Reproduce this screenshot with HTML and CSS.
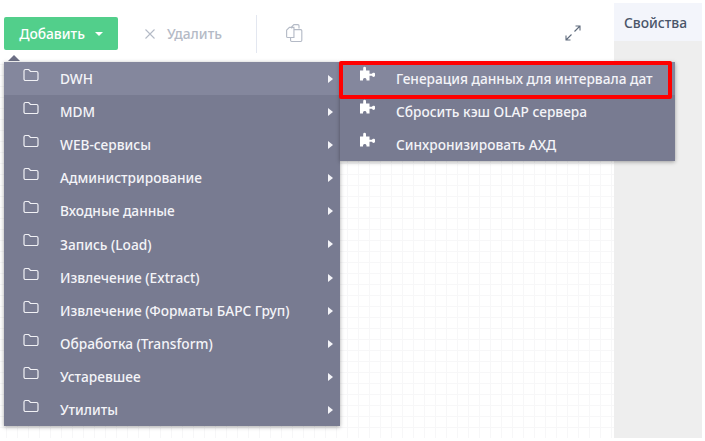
FILE: index.html
```html
<!DOCTYPE html>
<html lang="ru">
<head>
<meta charset="utf-8">
<title>Конструктор</title>
<link rel="stylesheet" href="styles.css">
</head>
<body>
<svg class="sprites" width="0" height="0" aria-hidden="true">
  <symbol id="folder" viewBox="0 0 16 14"><path d="M1 3a1.500 1.500 0 0 1 1.500-1.500h3.200l1.800 2h6A1.500 1.500 0 0 1 15 5v6a1.500 1.500 0 0 1-1.500 1.500h-11A1.500 1.500 0 0 1 1 11z" fill="none" stroke="currentColor" stroke-width="1.200"/></symbol>
  <symbol id="puzzle" viewBox="0 0 15 15"><path d="M0 4.500H3.200V2.200a1.400 1.400 0 0 1 2.800 0V4.500H9.500V7.800H12A1 1 0 0 1 15 8.800A1 1 0 0 1 12 9.800H9.500V14.500H6.500V13.500A1.800 1.800 0 0 0 3 13.500V14.500H0z" fill="currentColor"/></symbol>
</svg>
<div class="app">
  <main class="workspace">
    <div class="toolbar">
      <button class="btn-add">Добавить <span class="caret"></span></button>
      <button class="btn-del"><svg class="x" viewBox="0 0 12 12"><path d="M1.500 1.500l9 9m0-9l-9 9" stroke="currentColor" stroke-width="1.100" fill="none"/></svg>Удалить</button>
      <span class="sep"></span>
      <svg class="copy" viewBox="2 1 15 16"><path d="M7 5V3.500L9 1.500h3.500a1 1 0 0 1 1 1V5M2.500 6.500L5 4h4v9H3.500a1 1 0 0 1-1-1zM9 6h6a1 1 0 0 1 1 1v8.500a1 1 0 0 1-1 1H7a1 1 0 0 1-1-1V13" fill="none" stroke="currentColor" stroke-width="1"/></svg>
      <svg class="expand" viewBox="0 0 16 16"><path d="M9.500 6.500L15 1M10.500 1H15V5.500M6.500 9.500L1 15M1 10.500V15H5.500" fill="none" stroke="currentColor" stroke-width="1.100"/></svg>
    </div>
    <div class="canvas"></div>
  </main>
  <aside class="props">
    <div class="props-head">Свойства</div>
    <div class="props-body"></div>
  </aside>
</div>

<div class="menu-arrow"></div>
<ul class="menu main-menu">
  <li class="item active"><svg class="ico"><use href="#folder"/></svg><span>DWH</span><i class="tri"></i></li>
  <li class="item"><svg class="ico"><use href="#folder"/></svg><span>MDM</span><i class="tri"></i></li>
  <li class="item"><svg class="ico"><use href="#folder"/></svg><span>WEB-сервисы</span><i class="tri"></i></li>
  <li class="item"><svg class="ico"><use href="#folder"/></svg><span>Администрирование</span><i class="tri"></i></li>
  <li class="item"><svg class="ico"><use href="#folder"/></svg><span>Входные данные</span><i class="tri"></i></li>
  <li class="item"><svg class="ico"><use href="#folder"/></svg><span>Запись (Load)</span><i class="tri"></i></li>
  <li class="item"><svg class="ico"><use href="#folder"/></svg><span>Извлечение (Extract)</span><i class="tri"></i></li>
  <li class="item"><svg class="ico"><use href="#folder"/></svg><span>Извлечение (Форматы БАРС Груп)</span><i class="tri"></i></li>
  <li class="item"><svg class="ico"><use href="#folder"/></svg><span>Обработка (Transform)</span><i class="tri"></i></li>
  <li class="item"><svg class="ico"><use href="#folder"/></svg><span>Устаревшее</span><i class="tri"></i></li>
  <li class="item"><svg class="ico"><use href="#folder"/></svg><span>Утилиты</span><i class="tri"></i></li>
</ul>
<ul class="menu sub-menu">
  <li class="item active"><svg class="ico"><use href="#puzzle"/></svg><span>Генерация данных для интервала дат</span></li>
  <li class="item"><svg class="ico"><use href="#puzzle"/></svg><span>Сбросить кэш OLAP сервера</span></li>
  <li class="item"><svg class="ico"><use href="#puzzle"/></svg><span>Синхронизировать АХД</span></li>
</ul>
<div class="highlight"></div>
</body>
</html>
```
FILE: styles.css
```css
* { box-sizing: border-box; }
html, body { margin: 0; height: 100%; background: #fff; overflow: hidden; }
body { font-family: "Noto Sans", "Open Sans", sans-serif; font-size: 13px; position: relative; }
.sprites { position: absolute; }
.app { display: flex; width: 702px; height: 438px; }
.workspace { flex: none; width: 614px; display: flex; flex-direction: column; }
.toolbar { height: 62px; flex: none; display: flex; align-items: flex-start; padding: 17px 0 0 4px; position: relative; }
.btn-add { width: 114px; height: 33px; border: 0; border-radius: 2px; background: #52cf8b; color: #fff; font: 500 13.800px "Noto Sans", sans-serif; padding: 0; display: flex; align-items: center; justify-content: center; gap: 8px; }
.caret { width: 0; height: 0; border: 4px solid transparent; border-top: 4px solid #fff; border-bottom: 0; margin-left: 2px; }
.btn-del { border: 0; background: none; color: #b4bac6; font: 500 13.800px "Noto Sans", sans-serif; padding: 0; margin-left: 26px; height: 33px; display: flex; align-items: center; gap: 11px; }
.x { width: 12px; height: 12px; }
.sep { width: 1px; height: 38px; background: #e3e7f0; margin: -2px 0 0 34px; }
.copy { width: 17px; height: 18px; color: #b4bac6; margin: 7px 0 0 29px; }
.expand { width: 16px; height: 16px; color: #5f6b7c; position: absolute; left: 565px; top: 25px; }
.canvas { flex: 1; background-color: #fff; background-image: linear-gradient(#f7f7f8 1px, transparent 1px), linear-gradient(90deg, #f7f7f8 1px, transparent 1px); background-size: 11px 11px; background-position: 6px 2px; }
.props { flex: none; width: 88px; margin-top: 3px; display: flex; flex-direction: column; }
.props-head { height: 38px; background: #f3f5fb; color: #4a5569; font-weight: 500; font-size: 13.800px; padding: 11px 0 0 10px; line-height: 18px; }
.props-body { flex: 1; background: #eee; }
.menu { position: absolute; margin: 0; padding: 0; list-style: none; background: #787b91; color: #f4f4f8; box-shadow: 0 1px 4px rgba(0,0,0,.35); }
.menu-arrow { position: absolute; left: 8px; top: 55px; width: 0; height: 0; border: 6px solid transparent; border-bottom: 6px solid #6d7086; border-top: 0; }
.main-menu { left: 4px; top: 62px; width: 336px; }
.sub-menu { left: 340px; top: 62px; width: 335px; }
.item { height: 33.100px; display: flex; align-items: center; position: relative; font-weight: 500; font-size: 13.700px; padding: 0 0 0 56px; white-space: nowrap; }
.active { background: #84879d; }
.ico { position: absolute; left: 19px; top: 6px; width: 16px; height: 14px; color: #f1f1f5; }
.sub-menu .ico { left: 20px; top: 4px; width: 15px; height: 15px; color: #fff; }
.tri { position: absolute; right: 7px; top: 13px; width: 0; height: 0; border: 4px solid transparent; border-left: 5px solid #f4f4f8; border-right: 0; }
.highlight { position: absolute; left: 339px; top: 60.500px; width: 333px; height: 38px; border: 4px solid #f00; border-radius: 2px; }
```
